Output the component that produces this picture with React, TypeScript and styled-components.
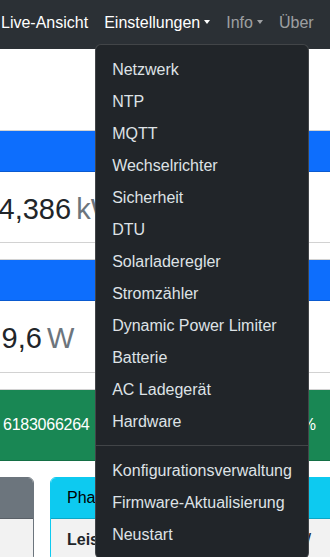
import React from "react";
import styled, { createGlobalStyle } from "styled-components";

const GlobalStyle = createGlobalStyle`
  html, body { margin: 0; padding: 0; background: #fff; }
  body {
    font-family: "Liberation Sans", Arial, sans-serif;
    font-size: 16px;
    line-height: 1.5;
    color: #212529;
    overflow: hidden;
  }
  * { box-sizing: border-box; }
`;

const Page = styled.div`
  width: 330px;
  height: 557px;
  overflow: hidden;
  position: relative;
  background: #fff;
`;

const Navbar = styled.nav`
  position: relative;
  z-index: 10;
  display: flex;
  align-items: flex-start;
  height: 49px;
  padding-top: 3px;
  background: #2b3035;
`;

const NavList = styled.ul`
  display: flex;
  align-items: flex-start;
  margin: 0 0 0 -7px;
  padding: 0;
  list-style: none;
`;

const NavItem = styled.li`
  position: relative;
`;

const NavLink = styled.a<{ $active?: boolean }>`
  display: block;
  padding: 8px;
  font-size: 16px;
  line-height: 24px;
  white-space: nowrap;
  text-decoration: none;
  color: ${(p) => (p.$active ? "#ffffff" : "rgba(255, 255, 255, 0.55)")};
`;

const Caret = styled.span`
  display: inline-block;
  margin-left: 4px;
  vertical-align: 4px;
  width: 0;
  height: 0;
  border-top: 4px solid currentColor;
  border-left: 3.5px solid transparent;
  border-right: 3.5px solid transparent;
`;

const Menu = styled.ul`
  position: absolute;
  top: 100%;
  left: -1px;
  z-index: 20;
  margin: 1px 0 0;
  padding: 8px 0;
  list-style: none;
  background: #212529;
  border: 1px solid rgba(255, 255, 255, 0.15);
  border-radius: 6px;
`;

const MenuItem = styled.a`
  display: block;
  padding: 5px 16px 3px;
  line-height: 24px;
  font-size: 16px;
  white-space: nowrap;
  color: #dee2e6;
  text-decoration: none;
`;

const Divider = styled.li`
  height: 0;
  margin: 8px 0;
  border-top: 1px solid rgba(255, 255, 255, 0.15);
`;

const Main = styled.main`
  padding-top: 81px;
`;

const Card = styled.div<{ $border?: string }>`
  margin: 0 -20px 16px;
  border: 1px solid ${(p) => p.$border ?? "rgba(0, 0, 0, 0.175)"};
  border-radius: 6px;
  overflow: hidden;
  background: #fff;
`;

const CardHeader = styled.div<{ $bg: string; $color?: string; $height?: number }>`
  display: flex;
  align-items: center;
  justify-content: space-between;
  height: ${(p) => p.$height ?? 41}px;
  padding: 0 16px;
  background: ${(p) => p.$bg};
  color: ${(p) => p.$color ?? "#ffffff"};
  border-bottom: 1px solid rgba(0, 0, 0, 0.175);
  white-space: nowrap;
`;

const ValueBody = styled.div<{ $indent: number }>`
  padding: 20px 16px 15.6px ${(p) => 16 + p.$indent}px;
`;

const Value = styled.h2`
  margin: 0;
  font-size: 29px;
  line-height: 34.8px;
  font-weight: 400;
  word-spacing: -3px;
  color: #212529;
  white-space: nowrap;
`;

const Unit = styled.span`
  color: #6c757d;
`;

const StatusHeader = styled(CardHeader)`
  padding: 0 33px 0 22px;
`;

const Serial = styled.span`
  letter-spacing: -0.25px;
`;

const GroupBody = styled.div`
  display: flex;
  gap: 16px;
  padding-top: 16px;
`;

const InnerCard = styled.div<{ $color: string; $width?: number }>`
  flex: ${(p) => (p.$width ? `0 0 ${p.$width}px` : "1 1 auto")};
  border: 1px solid ${(p) => p.$color};
  border-radius: 6px;
  overflow: hidden;
`;

const TableRow = styled.div`
  display: flex;
  justify-content: space-between;
  padding: 9px 37px 9px 16px;
  line-height: 24px;
  background: #f2f2f2;
  white-space: nowrap;
`;

const Th = styled.span`
  font-weight: 700;
  color: #212529;
`;

const Td = styled.span`
  color: #212529;
`;

const settingsItems = [
  "Netzwerk",
  "NTP",
  "MQTT",
  "Wechselrichter",
  "Sicherheit",
  "DTU",
  "Solarladeregler",
  "Stromzähler",
  "Dynamic Power Limiter",
  "Batterie",
  "AC Ladegerät",
  "Hardware",
];

const maintenanceItems = ["Konfigurationsverwaltung", "Firmware-Aktualisierung", "Neustart"];

export default function App() {
  return (
    <Page>
      <GlobalStyle />
      <Navbar>
        <NavList>
          <NavItem>
            <NavLink $active>Live-Ansicht</NavLink>
          </NavItem>
          <NavItem>
            <NavLink $active>
              Einstellungen
              <Caret />
            </NavLink>
            <Menu>
              {settingsItems.map((item) => (
                <li key={item}>
                  <MenuItem>{item}</MenuItem>
                </li>
              ))}
              <Divider />
              {maintenanceItems.map((item) => (
                <li key={item}>
                  <MenuItem>{item}</MenuItem>
                </li>
              ))}
            </Menu>
          </NavItem>
          <NavItem>
            <NavLink>
              Info
              <Caret />
            </NavLink>
          </NavItem>
          <NavItem>
            <NavLink>Über</NavLink>
          </NavItem>
        </NavList>
      </Navbar>
      <Main>
        <Card>
          <CardHeader $bg="#0d6efd" />
          <ValueBody $indent={1.5}>
            <Value>
              4,386 <Unit>kW</Unit>
            </Value>
          </ValueBody>
        </Card>
        <Card>
          <CardHeader $bg="#0d6efd" />
          <ValueBody $indent={4.5}>
            <Value>
              9,6 <Unit>W</Unit>
            </Value>
          </ValueBody>
        </Card>
        <Card>
          <StatusHeader $bg="#198754" $height={71}>
            <Serial>6183066264</Serial>
            <span>%</span>
          </StatusHeader>
          <GroupBody>
            <InnerCard $color="#6c757d" $width={53}>
              <CardHeader $bg="#6c757d" />
              <TableRow>
                <Th>&nbsp;</Th>
              </TableRow>
            </InnerCard>
            <InnerCard $color="#0dcaf0">
              <CardHeader $bg="#0dcaf0" $color="#000000">
                Phase 1
              </CardHeader>
              <TableRow>
                <Th>Leistung</Th>
                <Td>W</Td>
              </TableRow>
            </InnerCard>
          </GroupBody>
        </Card>
      </Main>
    </Page>
  );
}
